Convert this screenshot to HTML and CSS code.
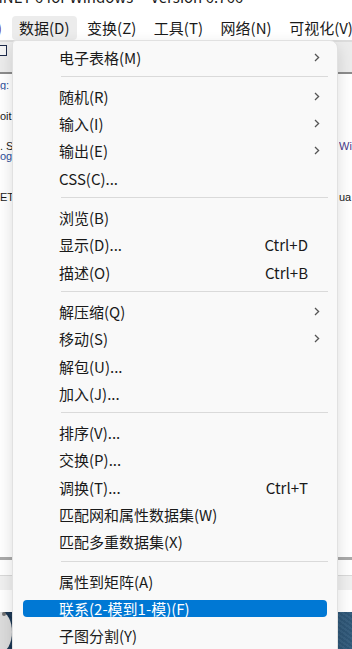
FILE: index.html
```html
<!DOCTYPE html>
<html>
<head>
  <title>UCINET 6 - 数据菜单</title>
  <link rel="stylesheet" href="styles.css">
</head>
<body>
  <div class="screen">
    <div class="title"><span>UCINET 6 for Windows -- Version 6.766</span></div>

    <div class="menubar">
      <span class="mi cut">)</span>
      <span class="mi open">数据(D)</span>
      <span class="mi">变换(Z)</span>
      <span class="mi">工具(T)</span>
      <span class="mi">网络(N)</span>
      <span class="mi">可视化(V)</span>
    </div>

    <div class="toolbar">
      <span class="tool-icon"></span>
    </div>

    <div class="log">
      <div class="line"><span class="left blue">g: <i class="mark"></i></span></div>
      <div class="line"></div>
      <div class="line"></div>
      <div class="line"><span class="left">oit</span></div>
      <div class="line"></div>
      <div class="line"></div>
      <div class="line"><span class="left">. S</span><span class="right purple">Win</span></div>
      <div class="line"><span class="left blue">og</span></div>
      <div class="line"></div>
      <div class="line"></div>
      <div class="line"></div>
      <div class="line"><span class="left">ET</span><span class="right">ua</span></div>
    </div>

    <div class="status"></div>
    <div class="taskbar"></div>
    <div class="wallpaper"><span class="blob"><i></i></span></div>

    <!-- open dropdown of 数据(D) -->
    <div class="menu">
      <div class="item"><span class="label">电子表格(M)</span><span class="arrow"><svg width="6" height="9" viewBox="0 0 6 9"><polyline points="1,1 4.6,4.5 1,8" /></svg></span></div>
      <div class="sep"></div>
      <div class="item"><span class="label">随机(R)</span><span class="arrow"><svg width="6" height="9" viewBox="0 0 6 9"><polyline points="1,1 4.6,4.5 1,8" /></svg></span></div>
      <div class="item"><span class="label">输入(I)</span><span class="arrow"><svg width="6" height="9" viewBox="0 0 6 9"><polyline points="1,1 4.6,4.5 1,8" /></svg></span></div>
      <div class="item"><span class="label">输出(E)</span><span class="arrow"><svg width="6" height="9" viewBox="0 0 6 9"><polyline points="1,1 4.6,4.5 1,8" /></svg></span></div>
      <div class="item"><span class="label">CSS(C)...</span><span class="arrow"></span></div>
      <div class="sep"></div>
      <div class="item"><span class="label">浏览(B)</span><span class="arrow"></span></div>
      <div class="item"><span class="label">显示(D)...</span><span class="key">Ctrl+D</span><span class="arrow"></span></div>
      <div class="item"><span class="label">描述(O)</span><span class="key">Ctrl+B</span><span class="arrow"></span></div>
      <div class="sep"></div>
      <div class="item"><span class="label">解压缩(Q)</span><span class="arrow"><svg width="6" height="9" viewBox="0 0 6 9"><polyline points="1,1 4.6,4.5 1,8" /></svg></span></div>
      <div class="item"><span class="label">移动(S)</span><span class="arrow"><svg width="6" height="9" viewBox="0 0 6 9"><polyline points="1,1 4.6,4.5 1,8" /></svg></span></div>
      <div class="item"><span class="label">解包(U)...</span><span class="arrow"></span></div>
      <div class="item"><span class="label">加入(J)...</span><span class="arrow"></span></div>
      <div class="sep"></div>
      <div class="item"><span class="label">排序(V)...</span><span class="arrow"></span></div>
      <div class="item"><span class="label">交换(P)...</span><span class="arrow"></span></div>
      <div class="item"><span class="label">调换(T)...</span><span class="key">Ctrl+T</span><span class="arrow"></span></div>
      <div class="item"><span class="label">匹配网和属性数据集(W)</span><span class="arrow"></span></div>
      <div class="item"><span class="label">匹配多重数据集(X)</span><span class="arrow"></span></div>
      <div class="sep"></div>
      <div class="item"><span class="label">属性到矩阵(A)</span><span class="arrow"></span></div>
      <div class="item active"><span class="label">联系(2-模到1-模)(F)</span></div>
      <div class="item"><span class="label">子图分割(Y)</span><span class="arrow"></span></div>
    </div>
  </div>
</body>
</html>
```

FILE: styles.css
```css
body {
  margin: 0;
  font-family: "Noto Sans CJK SC", sans-serif;
  color: #1a1a1a;
}

.screen {
  position: relative;
  width: 352px;
  height: 649px;
  overflow: hidden;
  background-color: #ffffff;
}

/* window title, mostly scrolled off the top */
.title {
  height: 16px;
  overflow: hidden;
  font-size: 15px;
}

.title span {
  display: block;
  margin-top: -11px;
  line-height: 16px;
  text-indent: -22px;
  white-space: nowrap;
}

.menubar {
  display: flex;
  align-items: center;
  height: 24px;
  font-size: 15px;
  white-space: nowrap;
}

.mi {
  flex-shrink: 0;
  height: 24px;
  line-height: 24px;
  padding: 0 8px 0 7px;
  margin-right: 2.6px;
}

.mi.cut {
  width: 12px;
  padding: 0;
  margin: 0;
  overflow: hidden;
  text-indent: -3px;
  color: #6a3a7a;
}

.mi.open {
  background-color: #ececec;
  border-radius: 4px;
}

.toolbar {
  height: 30px;
  border-top: 2px solid #dcdcdc;
  border-bottom: 2px solid #8c8c8c;
  background-color: #ececec;
}

.tool-icon {
  display: block;
  width: 9px;
  height: 9px;
  margin: 3px 0 0 -4px;
  border: 1px solid #1c2a4a;
  background-color: #f4f4f4;
}

.log {
  height: 483px;
  padding-top: 6px;
  box-sizing: border-box;
  font-family: "Liberation Sans", sans-serif;
  font-size: 11px;
}

.line {
  display: flex;
  justify-content: space-between;
  height: 10.2px;
  line-height: 10.2px;
  white-space: nowrap;
}

.left {
  width: 12px;
  overflow: hidden;
}

.right {
  width: 13px;
  overflow: hidden;
}

.blue {
  color: #2d4f9a;
}

.purple {
  color: #4a3a8a;
}

.mark {
  display: inline-block;
  width: 2px;
  height: 9px;
  background-color: #f1b04a;
  vertical-align: middle;
}

.status {
  height: 15px;
  border-top: 3px solid #a9a9a9;
}

.taskbar {
  height: 14px;
  border-top: 1px solid #d9d9d9;
  background-color: #f0f0f0;
}

.wallpaper {
  height: 60px;
  background-color: #2b5072;
  background-image:
    linear-gradient(90deg, rgba(10, 30, 55, 0.55), rgba(40, 90, 125, 0.2) 40%, rgba(60, 110, 140, 0.3)),
    repeating-linear-gradient(35deg, rgba(255, 255, 255, 0.05) 0 2px, rgba(0, 0, 0, 0.06) 2px 4px);
}

.blob {
  display: block;
  width: 22px;
  height: 40px;
  margin: 8px 0 0 -10px;
  border-radius: 50%;
  background-color: #dcdcdc;
}

.blob i {
  display: block;
  width: 4px;
  height: 4px;
  margin: 22px 0 0 12px;
  border-radius: 50%;
  background-color: #707070;
}

/* dropdown */
.menu {
  position: absolute;
  top: 40px;
  left: 12px;
  width: 326px;
  height: 640px;
  box-sizing: border-box;
  padding-top: 2.4px;
  background-color: #f9f9f9;
  border: 1px solid #e1e1e1;
  border-radius: 4px 8px 0 0;
  box-shadow: 0 6px 16px rgba(0, 0, 0, 0.14);
  font-size: 15px;
  color: #1a1a1a;
}

.item {
  display: flex;
  align-items: center;
  height: 27.3px;
  padding-left: 46px;
  white-space: nowrap;
}

.label {
  flex: 1;
}

.arrow {
  display: flex;
  align-items: center;
  width: 29px;
  padding-left: 6px;
  box-sizing: border-box;
}

.arrow polyline {
  fill: none;
  stroke: #555555;
  stroke-width: 1.3;
}

.sep {
  height: 1px;
  margin: 5.5px 9px 5.5px 48px;
  background-color: #dadada;
}

.item.active {
  height: 17.3px;
  margin: 5px 10px;
  padding-left: 36px;
  border-radius: 4px;
  background-color: #0078d4;
  color: #ffffff;
}
```
